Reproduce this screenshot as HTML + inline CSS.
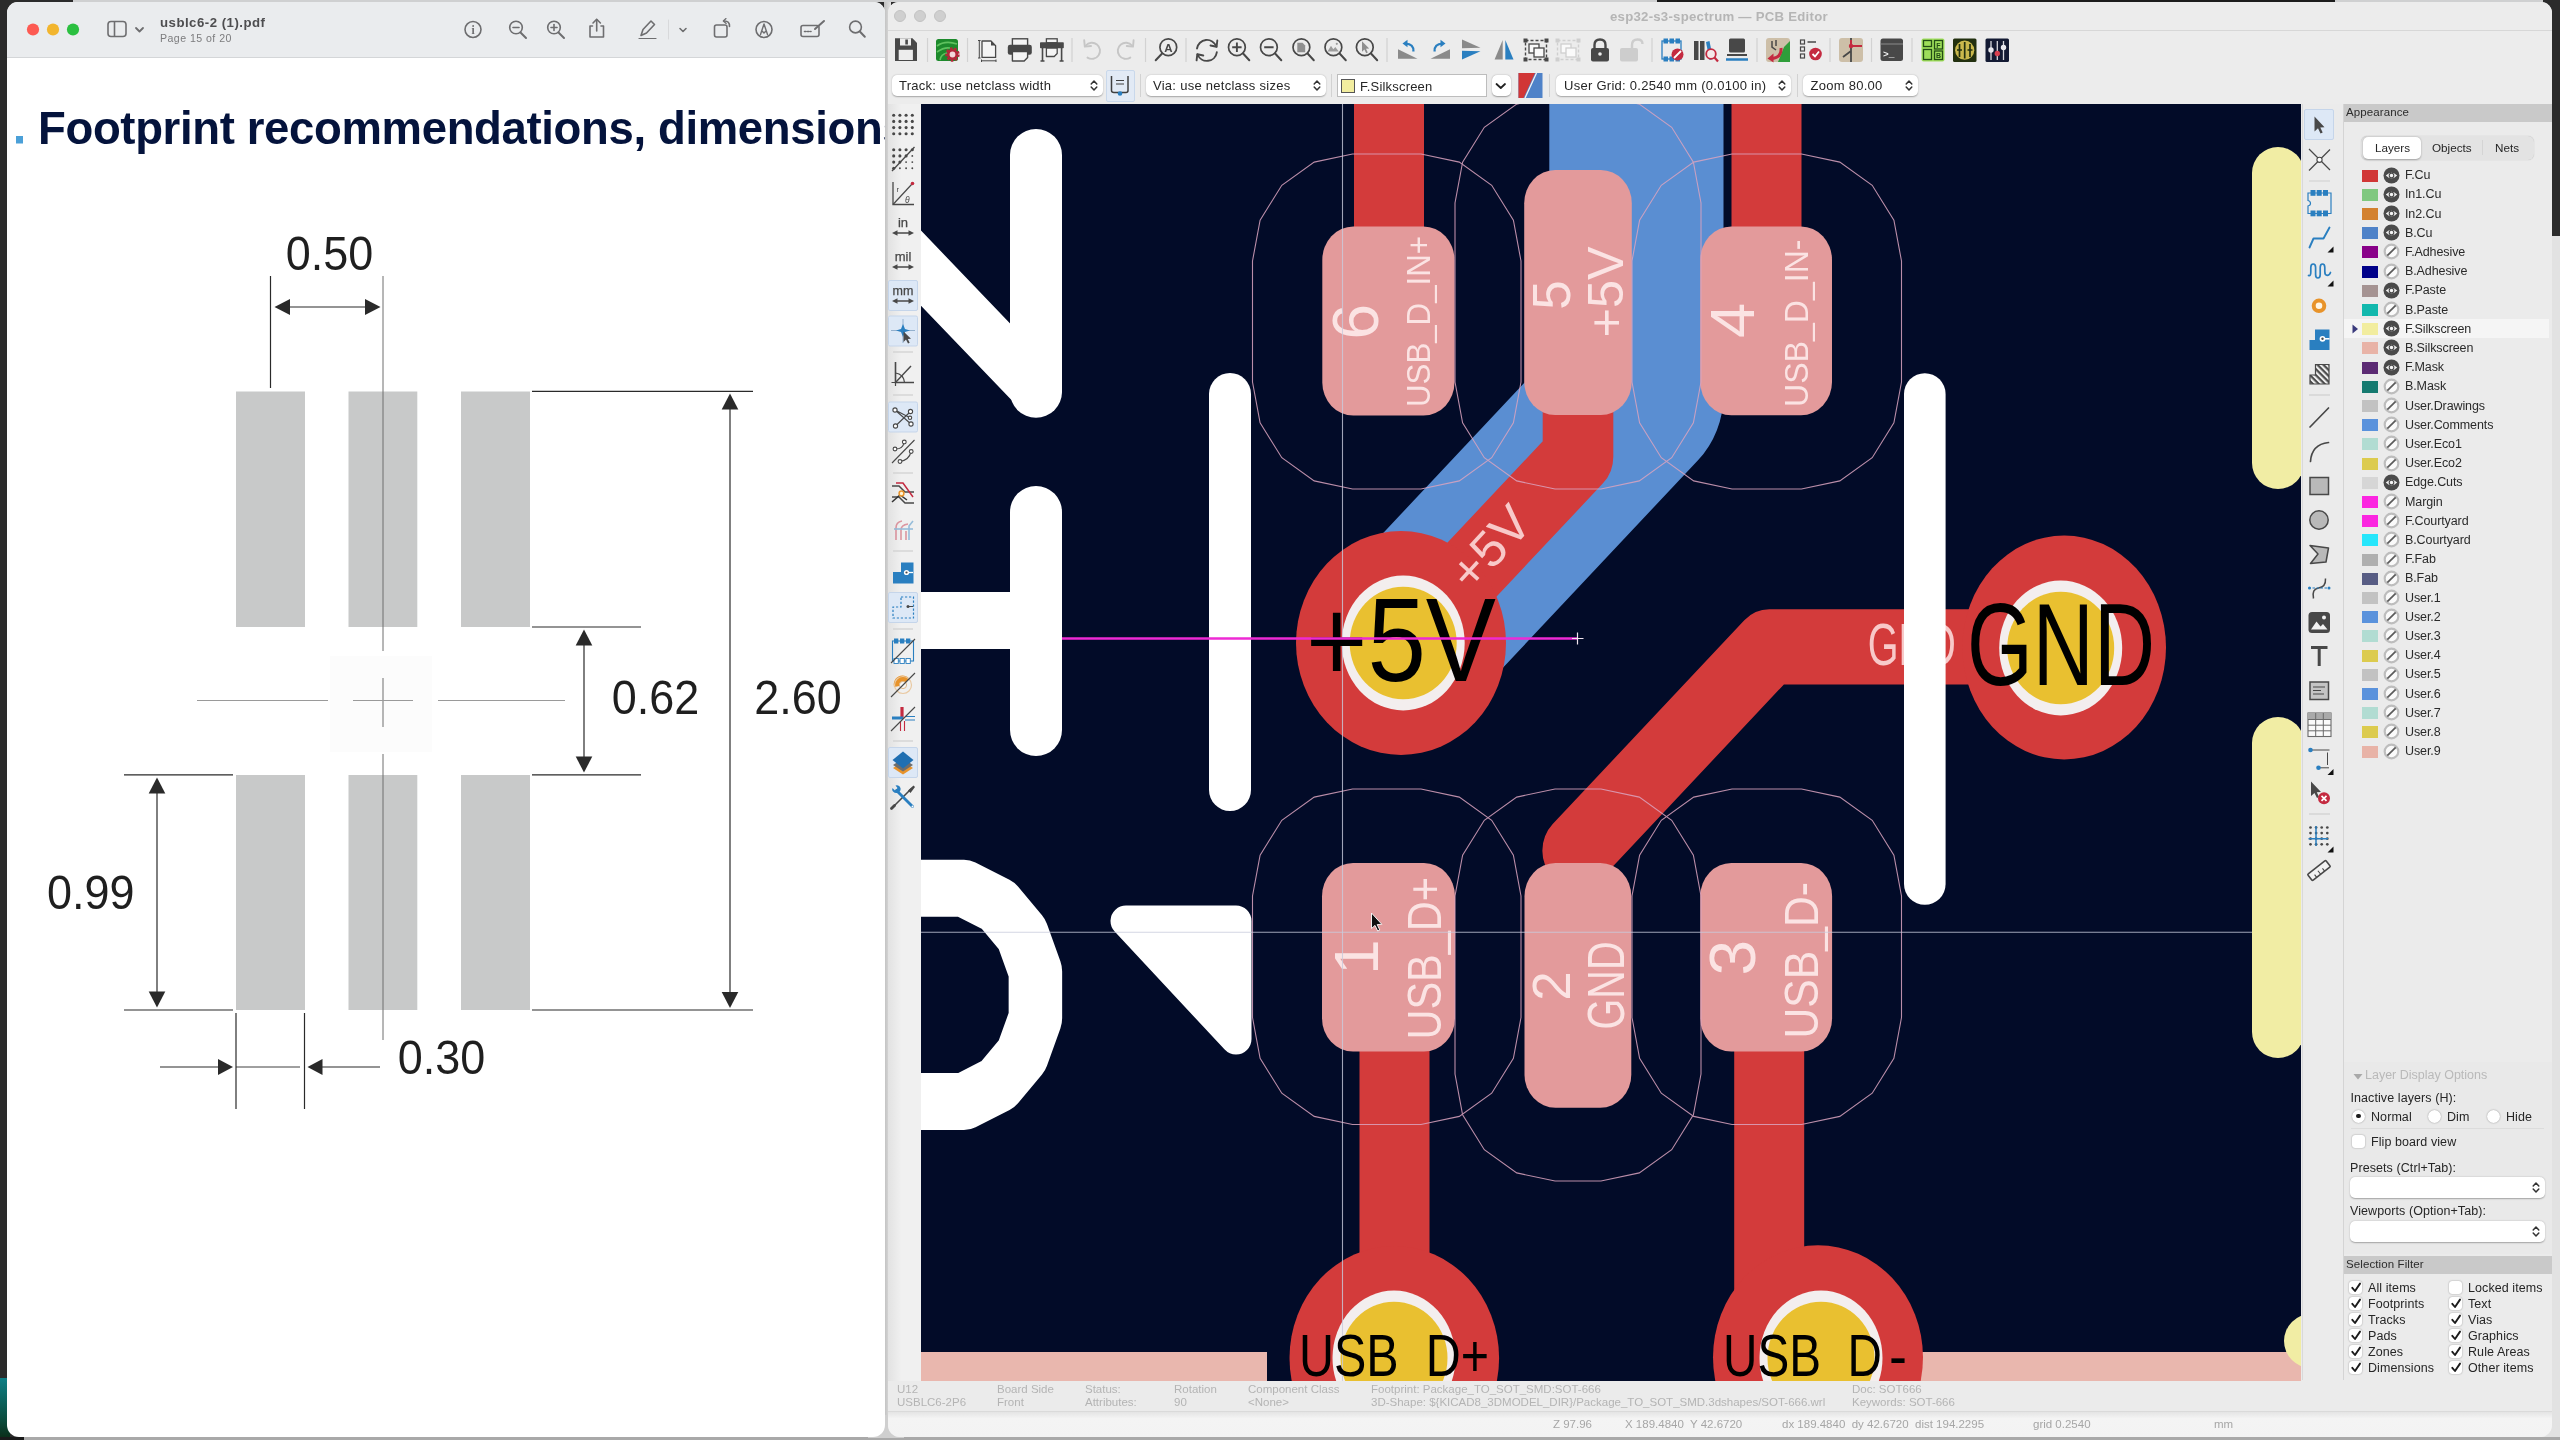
<!DOCTYPE html>
<html lang="en"><head><meta charset="utf-8"><title>PCB Editor</title>
<style>
*{box-sizing:border-box;margin:0;padding:0}
html,body{width:2560px;height:1440px;overflow:hidden;background:#2b2b2b;font-family:"Liberation Sans",sans-serif;}
.abs{position:absolute}
#desk{position:absolute;left:0;top:0;width:2560px;height:1440px;overflow:hidden;background:#2b2b2b;will-change:transform}
#pdf{position:absolute;left:7px;top:2px;width:878px;height:1435px;background:#fff;border-radius:11px 11px 12px 12px;overflow:hidden}
#pdfbar{position:absolute;left:0;top:0;width:878px;height:56px;background:#eaecee;border-bottom:1px solid #d4d6d8}
.tl{position:absolute;width:13px;height:13px;border-radius:50%}
#kicad{position:absolute;left:888px;top:2px;width:1664px;height:1435px;background:#ebebeb;border-radius:11px 11px 12px 12px;overflow:hidden}
.t{position:absolute;white-space:nowrap;line-height:1}
.lay{position:absolute;left:0;height:19px;width:204.500px}
.sw{position:absolute;left:18px;top:4px;width:16px;height:12px}
.ln{position:absolute;left:61px;top:3.7px;font-size:12.5px;color:#2a2a2a;white-space:nowrap;line-height:1;letter-spacing:-0.1px}
.dd{position:absolute;background:#fff;border-radius:5px;box-shadow:0 0.5px 1.5px rgba(0,0,0,.3);font-size:13px;color:#262626;line-height:1;white-space:nowrap;letter-spacing:0.27px}
.cb{position:absolute;width:13px;height:13px;border-radius:3px;background:#fff;box-shadow:0 0 1.5px rgba(0,0,0,.45)}
.rb{position:absolute;width:13px;height:13px;border-radius:50%;background:#fff;box-shadow:0 0 1.5px rgba(0,0,0,.45)}
.sf{position:absolute;margin-top:0.7px;letter-spacing:0.08px;font-size:12.5px;color:#262626;white-space:nowrap;line-height:1}
.msg{position:absolute;font-size:11.5px;color:#b4b4b4;white-space:nowrap;line-height:1}
.st{position:absolute;font-size:11.5px;color:#a6a6a6;white-space:nowrap;line-height:1;top:1417px}
</style></head><body><div id="desk">
<div class="abs" style="left:0;top:1378px;width:10px;height:62px;background:linear-gradient(#0e7f86,#0b4a3a 70%,#0a2a14)"></div>
<div class="abs" style="left:2538px;top:236px;width:22px;height:1204px;background:#e2e2e2"></div>
<div class="abs" style="left:0;top:1437px;width:2560px;height:3px;background:#a9a9a9"></div>
<div class="abs" style="left:0;top:1437px;width:24px;height:3px;background:#1a1a1a"></div>
<div class="abs" style="left:884px;top:0;width:7px;height:1438px;background:linear-gradient(90deg,#bfbfbf,#c9c9c9 30%,#e2e2e2)"></div>
<div class="abs" style="left:868px;top:1415px;width:36px;height:23px;background:#cfcfcf"></div>
<div id="pdf"><div id="pdfbar"></div>
<svg style="position:absolute;left:-7px;top:-2px" width="892" height="1440" viewBox="0 0 892 1440" font-family="Liberation Sans, sans-serif">
<circle cx="33" cy="29.5" r="6.1" fill="#fd5a52"/><circle cx="53" cy="29.5" r="6.1" fill="#f2b52e"/><circle cx="73" cy="29.5" r="6.1" fill="#2bc040"/>
<g fill="none" stroke="#6e6e70" stroke-width="1.6" stroke-linecap="round" stroke-linejoin="round">
<rect x="108" y="21.5" width="18" height="15" rx="3"/><line x1="114.5" y1="22" x2="114.5" y2="36"/>
<polyline points="136,28 139.5,31.5 143,28" stroke-width="1.8"/>
<circle cx="473" cy="29.5" r="8"/>
<circle cx="516" cy="27.5" r="6.3"/><line x1="520.5" y1="32.5" x2="526" y2="38" stroke-width="2"/><line x1="513" y1="27.5" x2="519" y2="27.5"/>
<circle cx="554" cy="27.5" r="6.3"/><line x1="558.5" y1="32.5" x2="564" y2="38" stroke-width="2"/><line x1="551" y1="27.5" x2="557" y2="27.5"/><line x1="554" y1="24.5" x2="554" y2="30.5"/>
<path d="M592.5,26 H590 V37 H603.5 V26 H601"/><line x1="596.7" y1="19.5" x2="596.7" y2="31"/><polyline points="593,23 596.7,19.3 600.4,23"/>
<path d="M641,35.5 L643,29.5 L651,21 L654.5,24.5 L646.5,33 Z"/><line x1="639" y1="38.5" x2="656" y2="38.5" stroke-width="1.2"/>
<line x1="668.5" y1="20" x2="668.5" y2="39" stroke="#d8d9db" stroke-width="1"/>
<polyline points="680,28.5 683,31.5 686,28.5" stroke-width="1.6"/>
<rect x="714.5" y="25" width="12.5" height="12" rx="2"/><path d="M729.500,26.500 Q729.800,20.800 724,21"/><polyline points="726,18.600 723.300,21 726.200,23.400" stroke-width="1.3"/>
<circle cx="764" cy="29.5" r="8"/><path d="M760.5,34.5 L764,24 L767.5,34.5 M762,31 L764,33 L766,31" stroke-width="1.4"/>
<rect x="801" y="25.5" width="18" height="11" rx="2"/><line x1="804.5" y1="31.5" x2="811" y2="31.5" stroke-dasharray="1.5 1.5"/><line x1="815" y1="29" x2="824" y2="21" stroke-width="2"/>
<circle cx="855.5" cy="27" r="5.900"/><line x1="859.800" y1="31.500" x2="864.800" y2="36.800" stroke-width="2"/>
</g>
<text x="473" y="33.8" font-size="11.5" font-weight="bold" text-anchor="middle" fill="#6e6e70" font-family="Liberation Serif, serif">i</text>
<text x="160" y="27" font-size="13.2" font-weight="bold" fill="#4e4e50" letter-spacing="0.5">usblc6-2 (1).pdf</text>
<text x="160" y="42" font-size="10.6" fill="#7c7c7e" letter-spacing="0.45">Page 15 of 20</text>
<rect x="16" y="136" width="7" height="7.5" fill="#4ba0d8"/>
<text x="38" y="143.5" font-size="45.5" font-weight="bold" fill="#04133c" letter-spacing="-0.35">Footprint recommendations, dimensions</text>
<rect x="236" y="391.5" width="69" height="235.5" fill="#c8c9c9"/>
<rect x="236" y="775" width="69" height="235" fill="#c8c9c9"/>
<rect x="348.5" y="391.5" width="68.8" height="235.5" fill="#c8c9c9"/>
<rect x="348.5" y="775" width="68.8" height="235" fill="#c8c9c9"/>
<rect x="461" y="391.5" width="69" height="235.5" fill="#c8c9c9"/>
<rect x="461" y="775" width="69" height="235" fill="#c8c9c9"/>
<rect x="330" y="656" width="102" height="96" fill="#fcfcfc"/>
<g stroke="#2a2a2a" stroke-width="1.2" fill="none">
<g stroke="#6f6f6f" stroke-width="1">
<line x1="383" y1="276" x2="383" y2="651"/><line x1="383" y1="678" x2="383" y2="727"/><line x1="383" y1="754" x2="383" y2="1040"/>
</g><g stroke="#9a9a9a" stroke-width="1">
<line x1="197" y1="700.5" x2="328" y2="700.5"/><line x1="353" y1="700.5" x2="413" y2="700.5"/><line x1="438" y1="700.5" x2="565" y2="700.5"/></g>
<line x1="270.5" y1="276" x2="270.5" y2="388"/><line x1="285" y1="307" x2="368" y2="307"/>
<line x1="532" y1="391.3" x2="753" y2="391.3"/><line x1="532" y1="627" x2="641" y2="627"/><line x1="532" y1="774.8" x2="641" y2="774.8"/><line x1="532" y1="1010" x2="753" y2="1010"/>
<line x1="124" y1="774.8" x2="233" y2="774.8"/><line x1="124" y1="1010" x2="233" y2="1010"/>
<line x1="730" y1="405" x2="730" y2="996"/><line x1="584" y1="640" x2="584" y2="762"/><line x1="157" y1="790" x2="157" y2="996"/>
<line x1="236" y1="1013" x2="236" y2="1109"/><line x1="304.5" y1="1013" x2="304.5" y2="1109"/>
<line x1="160" y1="1067" x2="222" y2="1067"/><line x1="236" y1="1067" x2="300" y2="1067" stroke-width="0.9"/><line x1="320" y1="1067" x2="380" y2="1067"/>
</g>
<polygon points="274.5,307 290,299 290,315" fill="#2a2a2a"/><polygon points="380.5,307 365,299 365,315" fill="#2a2a2a"/>
<polygon points="730,393.5 721.7,409.5 738.3,409.5" fill="#2a2a2a"/><polygon points="730,1008 721.7,992 738.3,992" fill="#2a2a2a"/>
<polygon points="584,629.5 575.7,645.5 592.3,645.5" fill="#2a2a2a"/><polygon points="584,772.5 575.7,756.5 592.3,756.5" fill="#2a2a2a"/>
<polygon points="157,777.5 148.7,793.5 165.3,793.5" fill="#2a2a2a"/><polygon points="157,1007.5 148.7,991.5 165.3,991.5" fill="#2a2a2a"/>
<polygon points="233,1067 218,1059 218,1075" fill="#2a2a2a"/><polygon points="307.5,1067 322.5,1059 322.5,1075" fill="#2a2a2a"/>
<text x="285.85" y="269.5" font-size="47.5" fill="#1f1f1f" textLength="87.5" lengthAdjust="spacingAndGlyphs">0.50</text>
<text x="611.65" y="714.4" font-size="47.5" fill="#1f1f1f" textLength="87.5" lengthAdjust="spacingAndGlyphs">0.62</text>
<text x="754.25" y="713.6" font-size="47.5" fill="#1f1f1f" textLength="87.5" lengthAdjust="spacingAndGlyphs">2.60</text>
<text x="46.95" y="908.6" font-size="47.5" fill="#1f1f1f" textLength="87.5" lengthAdjust="spacingAndGlyphs">0.99</text>
<text x="397.65" y="1073.6" font-size="47.5" fill="#1f1f1f" textLength="87.5" lengthAdjust="spacingAndGlyphs">0.30</text>
</svg></div>
<div id="kicad">
<svg style="position:absolute;left:33px;top:102px" width="1380" height="1277" viewBox="921 104 1380 1277" font-family="Liberation Sans, sans-serif">
<rect x="921" y="104" width="1380" height="1277" fill="#020b28"/>
<rect x="921" y="1352" width="346" height="30" fill="#e9b7ae"/><rect x="1900" y="1352" width="401" height="30" fill="#e9b7ae"/>
<g transform="scale(1,1.064)" fill="none" stroke-linejoin="round" stroke-linecap="round">
<path d="M1403,604.323 L1636.4,370.923 V40" stroke="#5a8ed2" stroke-width="174.2"/>
<g stroke="#d33b3b">
<path d="M1389,40 V290" stroke-width="70"/>
<path d="M1766.5,40 V290" stroke-width="70"/>
<path d="M1578,360 V429.323 L1403,604.323" stroke-width="70.6"/>
<path d="M2064,607.9 H1769.3 L1577.7,799.5" stroke-width="70.7"/>
<path d="M1394.5,950 V1280" stroke-width="70"/>
<path d="M1769.2,950 V1280" stroke-width="70"/>
</g></g>
<ellipse cx="1401" cy="643" rx="105" ry="112" fill="#d33b3b"/><ellipse cx="1403.2" cy="643" rx="61.5" ry="67.5" fill="#f3eeee"/><ellipse cx="1403.2" cy="643" rx="53.5" ry="56.3" fill="#e9c030"/>
<ellipse cx="2064.2" cy="647.5" rx="101.8" ry="112" fill="#d33b3b"/><ellipse cx="2060.7" cy="648" rx="61.5" ry="67.5" fill="#f3eeee"/><ellipse cx="2060.7" cy="648" rx="53.5" ry="56.3" fill="#e9c030"/>
<ellipse cx="1394.3" cy="1358" rx="104.8" ry="112" fill="#d33b3b"/><ellipse cx="1394" cy="1358" rx="61.5" ry="67.5" fill="#f3eeee"/><ellipse cx="1394" cy="1358" rx="53.5" ry="56.3" fill="#e9c030"/>
<ellipse cx="1818" cy="1357.3" rx="105" ry="112" fill="#d33b3b"/><ellipse cx="1821" cy="1358" rx="61.5" ry="67.5" fill="#f3eeee"/><ellipse cx="1821" cy="1358" rx="53.5" ry="56.3" fill="#e9c030"/>
<rect x="1322.3" y="226.5" width="132.2" height="189.1" rx="31" ry="33.17" fill="#e39a9b"/>
<rect x="1524.2" y="170" width="107.6" height="245" rx="31" ry="33.17" fill="#e39a9b"/>
<rect x="1700.3" y="226.5" width="131.7" height="188.7" rx="31" ry="33.17" fill="#e39a9b"/>
<rect x="1322" y="863" width="133" height="188.4" rx="31" ry="33.17" fill="#e39a9b"/>
<rect x="1524.5" y="863" width="106.8" height="244.8" rx="31" ry="33.17" fill="#e39a9b"/>
<rect x="1700.3" y="863" width="131.8" height="188.4" rx="31" ry="33.17" fill="#e39a9b"/>
<g fill="none" stroke="#dba4bf" stroke-width="1.1" opacity="0.85">
<polygon points="1421.0,154.0 1459.3,162.1 1491.7,185.3 1513.4,220.1 1521.0,261.0 1521.0,382.0 1513.4,422.9 1491.7,457.7 1459.3,480.9 1421.0,489.0 1352.5,489.0 1314.2,480.9 1281.8,457.7 1260.1,422.9 1252.5,382.0 1252.5,261.0 1260.1,220.1 1281.8,185.3 1314.2,162.1 1352.5,154.0"/>
<polygon points="1601.0,96.0 1639.3,104.1 1671.7,127.3 1693.4,162.1 1701.0,203.0 1701.0,382.0 1693.4,422.9 1671.7,457.7 1639.3,480.9 1601.0,489.0 1555.0,489.0 1516.7,480.9 1484.3,457.7 1462.6,422.9 1455.0,382.0 1455.0,203.0 1462.6,162.1 1484.3,127.3 1516.7,104.1 1555.0,96.0"/>
<polygon points="1801.5,154.0 1839.8,162.1 1872.2,185.3 1893.9,220.1 1901.5,261.0 1901.5,382.0 1893.9,422.9 1872.2,457.7 1839.8,480.9 1801.5,489.0 1732.0,489.0 1693.7,480.9 1661.3,457.7 1639.6,422.9 1632.0,382.0 1632.0,261.0 1639.6,220.1 1661.3,185.3 1693.7,162.1 1732.0,154.0"/>
<polygon points="1421.0,789.0 1459.3,797.1 1491.7,820.3 1513.4,855.1 1521.0,896.0 1521.0,1017.5 1513.4,1058.4 1491.7,1093.2 1459.3,1116.4 1421.0,1124.5 1352.5,1124.5 1314.2,1116.4 1281.8,1093.2 1260.1,1058.4 1252.5,1017.5 1252.5,896.0 1260.1,855.1 1281.8,820.3 1314.2,797.1 1352.5,789.0"/>
<polygon points="1601.0,789.0 1639.3,797.1 1671.7,820.3 1693.4,855.1 1701.0,896.0 1701.0,1074.0 1693.4,1114.9 1671.7,1149.7 1639.3,1172.9 1601.0,1181.0 1555.0,1181.0 1516.7,1172.9 1484.3,1149.7 1462.6,1114.9 1455.0,1074.0 1455.0,896.0 1462.6,855.1 1484.3,820.3 1516.7,797.1 1555.0,789.0"/>
<polygon points="1801.5,789.0 1839.8,797.1 1872.2,820.3 1893.9,855.1 1901.5,896.0 1901.5,1017.5 1893.9,1058.4 1872.2,1093.2 1839.8,1116.4 1801.5,1124.5 1732.0,1124.5 1693.7,1116.4 1661.3,1093.2 1639.6,1058.4 1632.0,1017.5 1632.0,896.0 1639.6,855.1 1661.3,820.3 1693.7,797.1 1732.0,789.0"/>
</g>
<text transform="translate(1377.5,321.7) rotate(-90)" font-size="64" fill="#fbe3e3" text-anchor="middle">6</text>
<text transform="translate(1430,407) rotate(-90)" font-size="32.6" fill="#fbe3e3" textLength="171" lengthAdjust="spacingAndGlyphs">USB_D_IN+</text>
<text transform="translate(1569.5,295) rotate(-90)" font-size="53" fill="#fbe3e3" text-anchor="middle">5</text>
<text transform="translate(1622.8,337.5) rotate(-90)" font-size="50.5" fill="#fbe3e3" textLength="91" lengthAdjust="spacingAndGlyphs">+5V</text>
<text transform="translate(1753.7,320.6) rotate(-90)" font-size="63" fill="#fbe3e3" text-anchor="middle">4</text>
<text transform="translate(1808,407) rotate(-90)" font-size="33.6" fill="#fbe3e3" textLength="167.5" lengthAdjust="spacingAndGlyphs">USB_D_IN-</text>
<text transform="translate(1377.5,957) rotate(-90)" font-size="63.5" fill="#fbe3e3" text-anchor="middle">1</text>
<text transform="translate(1441,1039.5) rotate(-90)" font-size="49" fill="#fbe3e3" textLength="162.5" lengthAdjust="spacingAndGlyphs">USB_D+</text>
<text transform="translate(1569.8,986) rotate(-90)" font-size="53" fill="#fbe3e3" text-anchor="middle">2</text>
<text transform="translate(1624,1029.5) rotate(-90)" font-size="52" fill="#fbe3e3" textLength="88" lengthAdjust="spacingAndGlyphs">GND</text>
<text transform="translate(1754.6,957.8) rotate(-90)" font-size="64" fill="#fbe3e3" text-anchor="middle">3</text>
<text transform="translate(1818,1038.5) rotate(-90)" font-size="48" fill="#fbe3e3" textLength="156.5" lengthAdjust="spacingAndGlyphs">USB_D-</text>
<text transform="translate(1489.5,547) rotate(-47.5) translate(0,18)" font-size="50" text-anchor="middle" fill="#f8c9c9" textLength="93" lengthAdjust="spacingAndGlyphs">+5V</text>
<text x="1867.8" y="665" font-size="59.6" fill="#f8c9c9" textLength="88" lengthAdjust="spacingAndGlyphs">GND</text>
<g fill="none" stroke="#fff" stroke-linecap="round" stroke-linejoin="round">
<path d="M1036,155 V391.8" stroke-width="52"/><path d="M1036,388 L800,142" stroke-width="52"/>
<path d="M1036,512 V730" stroke-width="52"/><path d="M900,620.5 H1030" stroke-width="57" stroke-linecap="butt"/>
<path d="M1230,394 V790" stroke-width="42"/>
<path d="M1924.8,394 V884" stroke-width="41.6"/>
<g transform="scale(1,1.064)"><path d="M880,834.900 H964 L998,851 L1022,878 L1035.400,913 V957 L1022,992 L998,1019 L964,1035.300 H880" stroke-width="53.500" stroke-linejoin="round"/></g>
</g>
<polygon points="1126,921 1236,921 1236,1039" fill="#fff" stroke="#fff" stroke-width="31" stroke-linejoin="round"/>
<g fill="none" stroke="#f1eda4" stroke-linecap="round" stroke-width="52">
<path d="M2278,173 V463"/><path d="M2278,743 V1032"/></g>
<ellipse cx="2311" cy="1341" rx="27" ry="27" fill="#f1eda4"/>
<line x1="1342.5" y1="104" x2="1342.5" y2="1381" stroke="#c9cbdc" stroke-width="1.1" opacity="0.8"/>
<line x1="921" y1="932.3" x2="2252" y2="932.3" stroke="#c9cbdc" stroke-width="1.1" opacity="0.8"/>
<g fill="#000">
<text x="1306" y="681" font-size="119.5" textLength="190" lengthAdjust="spacingAndGlyphs">+5V</text>
<text x="1967" y="684.8" font-size="117" textLength="188" lengthAdjust="spacingAndGlyphs">GND</text>
<text x="1299" y="1376" font-size="58.6" textLength="190" lengthAdjust="spacingAndGlyphs" xml:space="preserve">USB  D+</text>
<text x="1723" y="1376" font-size="58.6" textLength="159" lengthAdjust="spacingAndGlyphs" xml:space="preserve">USB  D</text><text x="1889" y="1376" font-size="58.6" textLength="18" lengthAdjust="spacingAndGlyphs">-</text>
</g>
<line x1="1062" y1="638.5" x2="1578" y2="638.5" stroke="#ee2ad4" stroke-width="2.5"/>
<path d="M1572,638.5 H1583.500 M1577.5,632.500 V644.500" stroke="#f3e6f0" stroke-width="1.2" fill="none"/>
<path d="M1371.500,913 L1371.500,928.500 L1375,925.400 L1377.700,931 L1379.800,930 L1377.200,924.600 L1381.800,924.300 Z" fill="#111" stroke="#fff" stroke-width="0.9"/>
</svg>
<div class="abs" style="left:0px;top:-1px;width:1664px;height:30px;background:#ececec;border-bottom:1px solid #d7d7d7"></div>
<div class="abs" style="left:6px;top:8px;width:12px;height:12px;border-radius:50%;background:#cfcfcf;border:0.5px solid #c2c2c2"></div>
<div class="abs" style="left:26px;top:8px;width:12px;height:12px;border-radius:50%;background:#cfcfcf;border:0.5px solid #c2c2c2"></div>
<div class="abs" style="left:46px;top:8px;width:12px;height:12px;border-radius:50%;background:#cfcfcf;border:0.5px solid #c2c2c2"></div>
<div class="t" style="left:722px;top:7.5px;font-size:13.2px;font-weight:bold;color:#b5b5b5;letter-spacing:0.25px">esp32-s3-spectrum — PCB Editor</div>
<div class="abs" style="left:0px;top:29px;width:1664px;height:73px;background:#ececec"></div>
<div class="dd" style="left:4px;top:72.5px;width:211px;height:21.5px;padding:4.45px 0 0 7px;font-size:13px;">Track: use netclass width<svg class="abs" style="right:5px;top:4.25px" width="8" height="13" viewBox="0 0 8 13"><path d="M1.2,5 L4,2 L6.800,5 M1.200,8 L4,11 L6.800,8" fill="none" stroke="#333" stroke-width="1.500" stroke-linecap="round" stroke-linejoin="round"/></svg></div>
<div class="abs" style="left:217.5px;top:68px;width:29.5px;height:31.5px;background:#e2eaf5;border:1px solid #c9d8eb;border-radius:2px"></div>
<div class="abs" style="left:251.5px;top:72px;width:1px;height:23px;background:#d2d2d2"></div>
<div class="abs" style="left:442.5px;top:72px;width:1px;height:23px;background:#d2d2d2"></div>
<div class="abs" style="left:661px;top:72px;width:1px;height:23px;background:#d2d2d2"></div>
<div class="abs" style="left:908.5px;top:72px;width:1px;height:23px;background:#d2d2d2"></div>
<div class="dd" style="left:258px;top:72.5px;width:180px;height:21.5px;padding:4.45px 0 0 7px;font-size:13px;">Via: use netclass sizes<svg class="abs" style="right:5px;top:4.25px" width="8" height="13" viewBox="0 0 8 13"><path d="M1.2,5 L4,2 L6.800,5 M1.200,8 L4,11 L6.800,8" fill="none" stroke="#333" stroke-width="1.500" stroke-linecap="round" stroke-linejoin="round"/></svg></div>
<div class="abs" style="left:449px;top:72px;width:150px;height:23px;background:#fff;border:1px solid #bdbdbd"></div>
<div class="abs" style="left:453px;top:76.5px;width:14px;height:14px;background:#f2ed9f;border:1px solid #555"></div>
<div class="t" style="left:472px;top:78px;font-size:13px;color:#262626;letter-spacing:0.2px">F.Silkscreen</div>
<div class="abs" style="left:603.5px;top:73px;width:19px;height:21px;background:#fff;border-radius:5px;box-shadow:0 0.5px 1.5px rgba(0,0,0,.35)"></div>
<div class="dd" style="left:668px;top:72.5px;width:235px;height:21.5px;padding:4.45px 0 0 8px;font-size:13px;">User Grid: 0.2540 mm (0.0100 in)<svg class="abs" style="right:5px;top:4.25px" width="8" height="13" viewBox="0 0 8 13"><path d="M1.2,5 L4,2 L6.800,5 M1.200,8 L4,11 L6.800,8" fill="none" stroke="#333" stroke-width="1.500" stroke-linecap="round" stroke-linejoin="round"/></svg></div>
<div class="dd" style="left:914.5px;top:72.5px;width:115px;height:21.5px;padding:4.45px 0 0 8px;font-size:13px;">Zoom 80.00<svg class="abs" style="right:5px;top:4.25px" width="8" height="13" viewBox="0 0 8 13"><path d="M1.2,5 L4,2 L6.800,5 M1.200,8 L4,11 L6.800,8" fill="none" stroke="#333" stroke-width="1.500" stroke-linecap="round" stroke-linejoin="round"/></svg></div>
<div class="abs" style="left:0px;top:102px;width:33px;height:1277px;background:linear-gradient(90deg,#e2e2e2,#f0f0f0 40%,#f0f0f0)"></div>
<div class="abs" style="left:1413px;top:102px;width:43px;height:1277px;background:#ebebeb"></div>
<div class="abs" style="left:1413.5px;top:102px;width:1px;height:1277px;background:#d9d9d9"></div>
<div class="abs" style="left:1455px;top:102px;width:1px;height:1277px;background:#d4d4d4"></div>
<div class="abs" style="left:1456px;top:102px;width:208px;height:17.5px;background:#c9c9c9"></div>
<div class="t" style="left:1458px;top:105px;font-size:11.5px;color:#2c2c2c;letter-spacing:0.1px">Appearance</div>
<div class="abs" style="left:1456px;top:119.5px;width:208px;height:1259px;background:#ebebeb"></div>
<div class="abs" style="left:1473px;top:133.5px;width:173px;height:24px;background:#e3e3e3;border-radius:6px;box-shadow:0 0 1px rgba(0,0,0,.25)"></div>
<div class="abs" style="left:1474.5px;top:134.5px;width:58px;height:22px;background:#fff;border-radius:5px;box-shadow:0 0.5px 2px rgba(0,0,0,.3)"></div>
<div class="abs" style="left:1594px;top:138px;width:1px;height:15px;background:#d4d4d4"></div>
<div class="t" style="left:1487px;top:139.5px;font-size:11.7px;color:#262626">Layers</div>
<div class="t" style="left:1544px;top:139.5px;font-size:11.7px;color:#262626">Objects</div>
<div class="t" style="left:1607px;top:139.5px;font-size:11.7px;color:#262626">Nets</div>
<div class="lay" style="left:1456px;top:163.5px;"><div class="sw" style="background:#d13636"></div><svg class="abs" style="left:39px;top:1px" width="17" height="17" viewBox="0 0 17 17"><circle cx="8.500" cy="8.500" r="8" fill="#4a4a4a"/><path d="M2.800,8.500 Q8.500,2.800 14.200,8.500 Q8.500,14.200 2.800,8.500 Z" fill="#f4f4f4"/><circle cx="8.500" cy="8.500" r="2.300" fill="none" stroke="#4a4a4a" stroke-width="1.100"/></svg><div class="ln">F.Cu</div></div>
<div class="lay" style="left:1456px;top:182.7px;"><div class="sw" style="background:#7fc87f"></div><svg class="abs" style="left:39px;top:1px" width="17" height="17" viewBox="0 0 17 17"><circle cx="8.500" cy="8.500" r="8" fill="#4a4a4a"/><path d="M2.800,8.500 Q8.500,2.800 14.200,8.500 Q8.500,14.200 2.800,8.500 Z" fill="#f4f4f4"/><circle cx="8.500" cy="8.500" r="2.300" fill="none" stroke="#4a4a4a" stroke-width="1.100"/></svg><div class="ln">In1.Cu</div></div>
<div class="lay" style="left:1456px;top:201.9px;"><div class="sw" style="background:#d3812f"></div><svg class="abs" style="left:39px;top:1px" width="17" height="17" viewBox="0 0 17 17"><circle cx="8.500" cy="8.500" r="8" fill="#4a4a4a"/><path d="M2.800,8.500 Q8.500,2.800 14.200,8.500 Q8.500,14.200 2.800,8.500 Z" fill="#f4f4f4"/><circle cx="8.500" cy="8.500" r="2.300" fill="none" stroke="#4a4a4a" stroke-width="1.100"/></svg><div class="ln">In2.Cu</div></div>
<div class="lay" style="left:1456px;top:221.1px;"><div class="sw" style="background:#4f82c8"></div><svg class="abs" style="left:39px;top:1px" width="17" height="17" viewBox="0 0 17 17"><circle cx="8.500" cy="8.500" r="8" fill="#4a4a4a"/><path d="M2.800,8.500 Q8.500,2.800 14.200,8.500 Q8.500,14.200 2.800,8.500 Z" fill="#f4f4f4"/><circle cx="8.500" cy="8.500" r="2.300" fill="none" stroke="#4a4a4a" stroke-width="1.100"/></svg><div class="ln">B.Cu</div></div>
<div class="lay" style="left:1456px;top:240.3px;"><div class="sw" style="background:#880088"></div><svg class="abs" style="left:39px;top:1px" width="17" height="17" viewBox="0 0 17 17"><circle cx="8.500" cy="8.500" r="6.800" fill="#fafafa" stroke="#bdbdbd" stroke-width="2.200"/><line x1="4.300" y1="12.700" x2="12.700" y2="4.300" stroke="#5a5a5a" stroke-width="1.700"/></svg><div class="ln">F.Adhesive</div></div>
<div class="lay" style="left:1456px;top:259.5px;"><div class="sw" style="background:#000088"></div><svg class="abs" style="left:39px;top:1px" width="17" height="17" viewBox="0 0 17 17"><circle cx="8.500" cy="8.500" r="6.800" fill="#fafafa" stroke="#bdbdbd" stroke-width="2.200"/><line x1="4.300" y1="12.700" x2="12.700" y2="4.300" stroke="#5a5a5a" stroke-width="1.700"/></svg><div class="ln">B.Adhesive</div></div>
<div class="lay" style="left:1456px;top:278.7px;"><div class="sw" style="background:#a59392"></div><svg class="abs" style="left:39px;top:1px" width="17" height="17" viewBox="0 0 17 17"><circle cx="8.500" cy="8.500" r="8" fill="#4a4a4a"/><path d="M2.800,8.500 Q8.500,2.800 14.200,8.500 Q8.500,14.200 2.800,8.500 Z" fill="#f4f4f4"/><circle cx="8.500" cy="8.500" r="2.300" fill="none" stroke="#4a4a4a" stroke-width="1.100"/></svg><div class="ln">F.Paste</div></div>
<div class="lay" style="left:1456px;top:297.9px;"><div class="sw" style="background:#12b8ad"></div><svg class="abs" style="left:39px;top:1px" width="17" height="17" viewBox="0 0 17 17"><circle cx="8.500" cy="8.500" r="6.800" fill="#fafafa" stroke="#bdbdbd" stroke-width="2.200"/><line x1="4.300" y1="12.700" x2="12.700" y2="4.300" stroke="#5a5a5a" stroke-width="1.700"/></svg><div class="ln">B.Paste</div></div>
<div class="lay" style="left:1456px;top:317.1px;background:#f5f5f5;"><div class="sw" style="background:#f2ed9f"></div><svg class="abs" style="left:39px;top:1px" width="17" height="17" viewBox="0 0 17 17"><circle cx="8.500" cy="8.500" r="8" fill="#4a4a4a"/><path d="M2.800,8.500 Q8.500,2.800 14.200,8.500 Q8.500,14.200 2.800,8.500 Z" fill="#f4f4f4"/><circle cx="8.500" cy="8.500" r="2.300" fill="none" stroke="#4a4a4a" stroke-width="1.100"/></svg><div class="ln">F.Silkscreen</div></div>
<div class="lay" style="left:1456px;top:336.3px;"><div class="sw" style="background:#e8b3a7"></div><svg class="abs" style="left:39px;top:1px" width="17" height="17" viewBox="0 0 17 17"><circle cx="8.500" cy="8.500" r="8" fill="#4a4a4a"/><path d="M2.800,8.500 Q8.500,2.800 14.200,8.500 Q8.500,14.200 2.800,8.500 Z" fill="#f4f4f4"/><circle cx="8.500" cy="8.500" r="2.300" fill="none" stroke="#4a4a4a" stroke-width="1.100"/></svg><div class="ln">B.Silkscreen</div></div>
<div class="lay" style="left:1456px;top:355.5px;"><div class="sw" style="background:#5c2b74"></div><svg class="abs" style="left:39px;top:1px" width="17" height="17" viewBox="0 0 17 17"><circle cx="8.500" cy="8.500" r="8" fill="#4a4a4a"/><path d="M2.800,8.500 Q8.500,2.800 14.200,8.500 Q8.500,14.200 2.800,8.500 Z" fill="#f4f4f4"/><circle cx="8.500" cy="8.500" r="2.300" fill="none" stroke="#4a4a4a" stroke-width="1.100"/></svg><div class="ln">F.Mask</div></div>
<div class="lay" style="left:1456px;top:374.7px;"><div class="sw" style="background:#157a70"></div><svg class="abs" style="left:39px;top:1px" width="17" height="17" viewBox="0 0 17 17"><circle cx="8.500" cy="8.500" r="6.800" fill="#fafafa" stroke="#bdbdbd" stroke-width="2.200"/><line x1="4.300" y1="12.700" x2="12.700" y2="4.300" stroke="#5a5a5a" stroke-width="1.700"/></svg><div class="ln">B.Mask</div></div>
<div class="lay" style="left:1456px;top:393.9px;"><div class="sw" style="background:#c2c2c2"></div><svg class="abs" style="left:39px;top:1px" width="17" height="17" viewBox="0 0 17 17"><circle cx="8.500" cy="8.500" r="6.800" fill="#fafafa" stroke="#bdbdbd" stroke-width="2.200"/><line x1="4.300" y1="12.700" x2="12.700" y2="4.300" stroke="#5a5a5a" stroke-width="1.700"/></svg><div class="ln">User.Drawings</div></div>
<div class="lay" style="left:1456px;top:413.1px;"><div class="sw" style="background:#5a92dc"></div><svg class="abs" style="left:39px;top:1px" width="17" height="17" viewBox="0 0 17 17"><circle cx="8.500" cy="8.500" r="6.800" fill="#fafafa" stroke="#bdbdbd" stroke-width="2.200"/><line x1="4.300" y1="12.700" x2="12.700" y2="4.300" stroke="#5a5a5a" stroke-width="1.700"/></svg><div class="ln">User.Comments</div></div>
<div class="lay" style="left:1456px;top:432.3px;"><div class="sw" style="background:#b1dcd2"></div><svg class="abs" style="left:39px;top:1px" width="17" height="17" viewBox="0 0 17 17"><circle cx="8.500" cy="8.500" r="6.800" fill="#fafafa" stroke="#bdbdbd" stroke-width="2.200"/><line x1="4.300" y1="12.700" x2="12.700" y2="4.300" stroke="#5a5a5a" stroke-width="1.700"/></svg><div class="ln">User.Eco1</div></div>
<div class="lay" style="left:1456px;top:451.5px;"><div class="sw" style="background:#dccb4e"></div><svg class="abs" style="left:39px;top:1px" width="17" height="17" viewBox="0 0 17 17"><circle cx="8.500" cy="8.500" r="6.800" fill="#fafafa" stroke="#bdbdbd" stroke-width="2.200"/><line x1="4.300" y1="12.700" x2="12.700" y2="4.300" stroke="#5a5a5a" stroke-width="1.700"/></svg><div class="ln">User.Eco2</div></div>
<div class="lay" style="left:1456px;top:470.7px;"><div class="sw" style="background:#d6d6d6"></div><svg class="abs" style="left:39px;top:1px" width="17" height="17" viewBox="0 0 17 17"><circle cx="8.500" cy="8.500" r="8" fill="#4a4a4a"/><path d="M2.800,8.500 Q8.500,2.800 14.200,8.500 Q8.500,14.200 2.800,8.500 Z" fill="#f4f4f4"/><circle cx="8.500" cy="8.500" r="2.300" fill="none" stroke="#4a4a4a" stroke-width="1.100"/></svg><div class="ln">Edge.Cuts</div></div>
<div class="lay" style="left:1456px;top:489.9px;"><div class="sw" style="background:#fb25e0"></div><svg class="abs" style="left:39px;top:1px" width="17" height="17" viewBox="0 0 17 17"><circle cx="8.500" cy="8.500" r="6.800" fill="#fafafa" stroke="#bdbdbd" stroke-width="2.200"/><line x1="4.300" y1="12.700" x2="12.700" y2="4.300" stroke="#5a5a5a" stroke-width="1.700"/></svg><div class="ln">Margin</div></div>
<div class="lay" style="left:1456px;top:509.1px;"><div class="sw" style="background:#fb25e0"></div><svg class="abs" style="left:39px;top:1px" width="17" height="17" viewBox="0 0 17 17"><circle cx="8.500" cy="8.500" r="6.800" fill="#fafafa" stroke="#bdbdbd" stroke-width="2.200"/><line x1="4.300" y1="12.700" x2="12.700" y2="4.300" stroke="#5a5a5a" stroke-width="1.700"/></svg><div class="ln">F.Courtyard</div></div>
<div class="lay" style="left:1456px;top:528.3px;"><div class="sw" style="background:#26e6fb"></div><svg class="abs" style="left:39px;top:1px" width="17" height="17" viewBox="0 0 17 17"><circle cx="8.500" cy="8.500" r="6.800" fill="#fafafa" stroke="#bdbdbd" stroke-width="2.200"/><line x1="4.300" y1="12.700" x2="12.700" y2="4.300" stroke="#5a5a5a" stroke-width="1.700"/></svg><div class="ln">B.Courtyard</div></div>
<div class="lay" style="left:1456px;top:547.5px;"><div class="sw" style="background:#afafaf"></div><svg class="abs" style="left:39px;top:1px" width="17" height="17" viewBox="0 0 17 17"><circle cx="8.500" cy="8.500" r="6.800" fill="#fafafa" stroke="#bdbdbd" stroke-width="2.200"/><line x1="4.300" y1="12.700" x2="12.700" y2="4.300" stroke="#5a5a5a" stroke-width="1.700"/></svg><div class="ln">F.Fab</div></div>
<div class="lay" style="left:1456px;top:566.7px;"><div class="sw" style="background:#585d84"></div><svg class="abs" style="left:39px;top:1px" width="17" height="17" viewBox="0 0 17 17"><circle cx="8.500" cy="8.500" r="6.800" fill="#fafafa" stroke="#bdbdbd" stroke-width="2.200"/><line x1="4.300" y1="12.700" x2="12.700" y2="4.300" stroke="#5a5a5a" stroke-width="1.700"/></svg><div class="ln">B.Fab</div></div>
<div class="lay" style="left:1456px;top:585.9px;"><div class="sw" style="background:#c2c2c2"></div><svg class="abs" style="left:39px;top:1px" width="17" height="17" viewBox="0 0 17 17"><circle cx="8.500" cy="8.500" r="6.800" fill="#fafafa" stroke="#bdbdbd" stroke-width="2.200"/><line x1="4.300" y1="12.700" x2="12.700" y2="4.300" stroke="#5a5a5a" stroke-width="1.700"/></svg><div class="ln">User.1</div></div>
<div class="lay" style="left:1456px;top:605.1px;"><div class="sw" style="background:#5a92dc"></div><svg class="abs" style="left:39px;top:1px" width="17" height="17" viewBox="0 0 17 17"><circle cx="8.500" cy="8.500" r="6.800" fill="#fafafa" stroke="#bdbdbd" stroke-width="2.200"/><line x1="4.300" y1="12.700" x2="12.700" y2="4.300" stroke="#5a5a5a" stroke-width="1.700"/></svg><div class="ln">User.2</div></div>
<div class="lay" style="left:1456px;top:624.3px;"><div class="sw" style="background:#b1dcd2"></div><svg class="abs" style="left:39px;top:1px" width="17" height="17" viewBox="0 0 17 17"><circle cx="8.500" cy="8.500" r="6.800" fill="#fafafa" stroke="#bdbdbd" stroke-width="2.200"/><line x1="4.300" y1="12.700" x2="12.700" y2="4.300" stroke="#5a5a5a" stroke-width="1.700"/></svg><div class="ln">User.3</div></div>
<div class="lay" style="left:1456px;top:643.5px;"><div class="sw" style="background:#dccb4e"></div><svg class="abs" style="left:39px;top:1px" width="17" height="17" viewBox="0 0 17 17"><circle cx="8.500" cy="8.500" r="6.800" fill="#fafafa" stroke="#bdbdbd" stroke-width="2.200"/><line x1="4.300" y1="12.700" x2="12.700" y2="4.300" stroke="#5a5a5a" stroke-width="1.700"/></svg><div class="ln">User.4</div></div>
<div class="lay" style="left:1456px;top:662.7px;"><div class="sw" style="background:#c2c2c2"></div><svg class="abs" style="left:39px;top:1px" width="17" height="17" viewBox="0 0 17 17"><circle cx="8.500" cy="8.500" r="6.800" fill="#fafafa" stroke="#bdbdbd" stroke-width="2.200"/><line x1="4.300" y1="12.700" x2="12.700" y2="4.300" stroke="#5a5a5a" stroke-width="1.700"/></svg><div class="ln">User.5</div></div>
<div class="lay" style="left:1456px;top:681.9px;"><div class="sw" style="background:#5a92dc"></div><svg class="abs" style="left:39px;top:1px" width="17" height="17" viewBox="0 0 17 17"><circle cx="8.500" cy="8.500" r="6.800" fill="#fafafa" stroke="#bdbdbd" stroke-width="2.200"/><line x1="4.300" y1="12.700" x2="12.700" y2="4.300" stroke="#5a5a5a" stroke-width="1.700"/></svg><div class="ln">User.6</div></div>
<div class="lay" style="left:1456px;top:701.1px;"><div class="sw" style="background:#b1dcd2"></div><svg class="abs" style="left:39px;top:1px" width="17" height="17" viewBox="0 0 17 17"><circle cx="8.500" cy="8.500" r="6.800" fill="#fafafa" stroke="#bdbdbd" stroke-width="2.200"/><line x1="4.300" y1="12.700" x2="12.700" y2="4.300" stroke="#5a5a5a" stroke-width="1.700"/></svg><div class="ln">User.7</div></div>
<div class="lay" style="left:1456px;top:720.3px;"><div class="sw" style="background:#dccb4e"></div><svg class="abs" style="left:39px;top:1px" width="17" height="17" viewBox="0 0 17 17"><circle cx="8.500" cy="8.500" r="6.800" fill="#fafafa" stroke="#bdbdbd" stroke-width="2.200"/><line x1="4.300" y1="12.700" x2="12.700" y2="4.300" stroke="#5a5a5a" stroke-width="1.700"/></svg><div class="ln">User.8</div></div>
<div class="lay" style="left:1456px;top:739.5px;"><div class="sw" style="background:#e8b3a7"></div><svg class="abs" style="left:39px;top:1px" width="17" height="17" viewBox="0 0 17 17"><circle cx="8.500" cy="8.500" r="6.800" fill="#fafafa" stroke="#bdbdbd" stroke-width="2.200"/><line x1="4.300" y1="12.700" x2="12.700" y2="4.300" stroke="#5a5a5a" stroke-width="1.700"/></svg><div class="ln">User.9</div></div>
<svg class="abs" style="left:1463.5px;top:322px" width="7" height="10" viewBox="0 0 7 10"><polygon points="0.5,0.5 6,5 0.5,9.500" fill="#3a3a7c"/></svg>
<div class="abs" style="left:1456px;top:1060px;width:208px;height:192px;background:#e9e9e9"></div>
<svg class="abs" style="left:1465px;top:1070.5px" width="10" height="7" viewBox="0 0 10 7"><polygon points="0.5,1 9.500,1 5,6.500" fill="#a9a9a9"/></svg>
<div class="t" style="left:1477px;top:1067px;font-size:12.5px;color:#b9b9b9">Layer Display Options</div>
<div class="sf" style="left:1462.5px;top:1089px;">Inactive layers (H):</div>
<div class="rb" style="left:1464px;top:1107.5px"><div class="abs" style="left:4.250px;top:4.250px;width:4.500px;height:4.500px;border-radius:50%;background:#1c1c1c"></div></div>
<div class="sf" style="left:1483px;top:1108px;">Normal</div>
<div class="rb" style="left:1540px;top:1107.5px"></div>
<div class="sf" style="left:1559px;top:1108px;">Dim</div>
<div class="rb" style="left:1598.5px;top:1107.5px"></div>
<div class="sf" style="left:1618px;top:1108px;">Hide</div>
<div class="abs" style="left:1463px;top:1126px;width:193px;height:1px;background:#dcdcdc"></div>
<div class="cb" style="left:1464px;top:1133px"></div>
<div class="sf" style="left:1483px;top:1133.5px;">Flip board view</div>
<div class="sf" style="left:1462px;top:1159px;">Presets (Ctrl+Tab):</div>
<div class="dd" style="left:1462px;top:1175px;width:195px;height:20.500px"><svg class="abs" style="right:5px;top:3.7px" width="8" height="13" viewBox="0 0 8 13"><path d="M1.2,5 L4,2 L6.800,5 M1.200,8 L4,11 L6.800,8" fill="none" stroke="#333" stroke-width="1.500" stroke-linecap="round" stroke-linejoin="round"/></svg></div>
<div class="sf" style="left:1462px;top:1202.5px;">Viewports (Option+Tab):</div>
<div class="dd" style="left:1462px;top:1219px;width:195px;height:20.500px"><svg class="abs" style="right:5px;top:3.7px" width="8" height="13" viewBox="0 0 8 13"><path d="M1.2,5 L4,2 L6.800,5 M1.200,8 L4,11 L6.800,8" fill="none" stroke="#333" stroke-width="1.500" stroke-linecap="round" stroke-linejoin="round"/></svg></div>
<div class="abs" style="left:1456px;top:1253.5px;width:208px;height:18px;background:#c9c9c9"></div>
<div class="t" style="left:1458px;top:1257px;font-size:11.5px;color:#2c2c2c;letter-spacing:0.1px">Selection Filter</div>
<div class="cb" style="left:1460.5px;top:1278.5px"><svg class="abs" style="left:1px;top:0px" width="12" height="13" viewBox="0 0 12 13"><path d="M2.300,6.800 L5,10 L10,2.600" fill="none" stroke="#1c1c1c" stroke-width="1.900" stroke-linecap="round" stroke-linejoin="round"/></svg></div>
<div class="sf" style="left:1480px;top:1279px;">All items</div>
<div class="cb" style="left:1560.5px;top:1278.5px"></div>
<div class="sf" style="left:1580px;top:1279px;">Locked items</div>
<div class="cb" style="left:1460.5px;top:1294.5px"><svg class="abs" style="left:1px;top:0px" width="12" height="13" viewBox="0 0 12 13"><path d="M2.300,6.800 L5,10 L10,2.600" fill="none" stroke="#1c1c1c" stroke-width="1.900" stroke-linecap="round" stroke-linejoin="round"/></svg></div>
<div class="sf" style="left:1480px;top:1295px;">Footprints</div>
<div class="cb" style="left:1560.5px;top:1294.5px"><svg class="abs" style="left:1px;top:0px" width="12" height="13" viewBox="0 0 12 13"><path d="M2.300,6.800 L5,10 L10,2.600" fill="none" stroke="#1c1c1c" stroke-width="1.900" stroke-linecap="round" stroke-linejoin="round"/></svg></div>
<div class="sf" style="left:1580px;top:1295px;">Text</div>
<div class="cb" style="left:1460.5px;top:1310.5px"><svg class="abs" style="left:1px;top:0px" width="12" height="13" viewBox="0 0 12 13"><path d="M2.300,6.800 L5,10 L10,2.600" fill="none" stroke="#1c1c1c" stroke-width="1.900" stroke-linecap="round" stroke-linejoin="round"/></svg></div>
<div class="sf" style="left:1480px;top:1311px;">Tracks</div>
<div class="cb" style="left:1560.5px;top:1310.5px"><svg class="abs" style="left:1px;top:0px" width="12" height="13" viewBox="0 0 12 13"><path d="M2.300,6.800 L5,10 L10,2.600" fill="none" stroke="#1c1c1c" stroke-width="1.900" stroke-linecap="round" stroke-linejoin="round"/></svg></div>
<div class="sf" style="left:1580px;top:1311px;">Vias</div>
<div class="cb" style="left:1460.5px;top:1326.5px"><svg class="abs" style="left:1px;top:0px" width="12" height="13" viewBox="0 0 12 13"><path d="M2.300,6.800 L5,10 L10,2.600" fill="none" stroke="#1c1c1c" stroke-width="1.900" stroke-linecap="round" stroke-linejoin="round"/></svg></div>
<div class="sf" style="left:1480px;top:1327px;">Pads</div>
<div class="cb" style="left:1560.5px;top:1326.5px"><svg class="abs" style="left:1px;top:0px" width="12" height="13" viewBox="0 0 12 13"><path d="M2.300,6.800 L5,10 L10,2.600" fill="none" stroke="#1c1c1c" stroke-width="1.900" stroke-linecap="round" stroke-linejoin="round"/></svg></div>
<div class="sf" style="left:1580px;top:1327px;">Graphics</div>
<div class="cb" style="left:1460.5px;top:1342.5px"><svg class="abs" style="left:1px;top:0px" width="12" height="13" viewBox="0 0 12 13"><path d="M2.300,6.800 L5,10 L10,2.600" fill="none" stroke="#1c1c1c" stroke-width="1.900" stroke-linecap="round" stroke-linejoin="round"/></svg></div>
<div class="sf" style="left:1480px;top:1343px;">Zones</div>
<div class="cb" style="left:1560.5px;top:1342.5px"><svg class="abs" style="left:1px;top:0px" width="12" height="13" viewBox="0 0 12 13"><path d="M2.300,6.800 L5,10 L10,2.600" fill="none" stroke="#1c1c1c" stroke-width="1.900" stroke-linecap="round" stroke-linejoin="round"/></svg></div>
<div class="sf" style="left:1580px;top:1343px;">Rule Areas</div>
<div class="cb" style="left:1460.5px;top:1358.5px"><svg class="abs" style="left:1px;top:0px" width="12" height="13" viewBox="0 0 12 13"><path d="M2.300,6.800 L5,10 L10,2.600" fill="none" stroke="#1c1c1c" stroke-width="1.900" stroke-linecap="round" stroke-linejoin="round"/></svg></div>
<div class="sf" style="left:1480px;top:1359px;">Dimensions</div>
<div class="cb" style="left:1560.5px;top:1358.5px"><svg class="abs" style="left:1px;top:0px" width="12" height="13" viewBox="0 0 12 13"><path d="M2.300,6.800 L5,10 L10,2.600" fill="none" stroke="#1c1c1c" stroke-width="1.900" stroke-linecap="round" stroke-linejoin="round"/></svg></div>
<div class="sf" style="left:1580px;top:1359px;">Other items</div>
<div class="abs" style="left:0px;top:1378.5px;width:1664px;height:30.5px;background:#ebebeb"></div>
<div class="abs" style="left:1413px;top:1378px;width:251px;height:31px;background:#ebebeb"></div>
<div class="msg" style="left:9px;top:1381.5px;">U12</div>
<div class="msg" style="left:9px;top:1395px;">USBLC6-2P6</div>
<div class="msg" style="left:109px;top:1381.5px;">Board Side</div>
<div class="msg" style="left:109px;top:1395px;">Front</div>
<div class="msg" style="left:197px;top:1381.5px;">Status:</div>
<div class="msg" style="left:197px;top:1395px;">Attributes:</div>
<div class="msg" style="left:286px;top:1381.5px;">Rotation</div>
<div class="msg" style="left:286px;top:1395px;">90</div>
<div class="msg" style="left:360px;top:1381.5px;">Component Class</div>
<div class="msg" style="left:360px;top:1395px;">&lt;None&gt;</div>
<div class="msg" style="left:483px;top:1381.5px;">Footprint: Package_TO_SOT_SMD:SOT-666</div>
<div class="msg" style="left:483px;top:1395px;">3D-Shape: ${KICAD8_3DMODEL_DIR}/Package_TO_SOT_SMD.3dshapes/SOT-666.wrl</div>
<div class="msg" style="left:964px;top:1381.5px;">Doc: SOT666</div>
<div class="msg" style="left:964px;top:1395px;">Keywords: SOT-666</div>
<div class="abs" style="left:0px;top:1408.5px;width:1664px;height:27px;background:linear-gradient(#e4e4e4,#f4f4f4 25%,#f3f3f3);border-top:1px solid #dadada"></div>
<div class="st" style="left:665px;white-space:pre">Z 97.96</div>
<div class="st" style="left:737px;white-space:pre">X 189.4840  Y 42.6720</div>
<div class="st" style="left:894px;white-space:pre">dx 189.4840  dy 42.6720  dist 194.2295</div>
<div class="st" style="left:1145px;white-space:pre">grid 0.2540</div>
<div class="st" style="left:1326px;white-space:pre">mm</div>
<svg class="abs" style="left:-888px;top:-2px" width="2560" height="1440" viewBox="0 0 2560 1440" font-family="Liberation Sans, sans-serif">
<g>
<line x1="927.5" y1="38" x2="927.5" y2="62" stroke="#d2d2d2" stroke-width="1.2"/>
<line x1="967.5" y1="38" x2="967.5" y2="62" stroke="#d2d2d2" stroke-width="1.2"/>
<line x1="1072" y1="38" x2="1072" y2="62" stroke="#d2d2d2" stroke-width="1.2"/>
<line x1="1145.5" y1="38" x2="1145.5" y2="62" stroke="#d2d2d2" stroke-width="1.2"/>
<line x1="1186" y1="38" x2="1186" y2="62" stroke="#d2d2d2" stroke-width="1.2"/>
<line x1="1387" y1="38" x2="1387" y2="62" stroke="#d2d2d2" stroke-width="1.2"/>
<line x1="1652" y1="38" x2="1652" y2="62" stroke="#d2d2d2" stroke-width="1.2"/>
<line x1="1757" y1="38" x2="1757" y2="62" stroke="#d2d2d2" stroke-width="1.2"/>
<line x1="1830" y1="38" x2="1830" y2="62" stroke="#d2d2d2" stroke-width="1.2"/>
<line x1="1871.5" y1="38" x2="1871.5" y2="62" stroke="#d2d2d2" stroke-width="1.2"/>
<line x1="1912" y1="38" x2="1912" y2="62" stroke="#d2d2d2" stroke-width="1.2"/>
<path d="M895,38.3 H912.5 L917,43 V61 H895 Z" fill="#484848"/><rect x="900" y="38.3" width="11" height="7.200" fill="#ededed"/><rect x="905.3" y="39.500" width="2.600" height="5" fill="#484848"/><rect x="898.700" y="49.800" width="14.200" height="10.200" fill="#ededed"/>
<rect x="936" y="39" width="22" height="22" rx="2.5" fill="#1d8a2c"/><path d="M937,46 Q945,40 957,44 M937,52 Q944,47 950,48 M940,60 Q941,54 947,53" stroke="#5fc25f" stroke-width="1.6" fill="none"/><circle cx="952.5" cy="54.5" r="5.6" fill="none" stroke="#b3283a" stroke-width="3.2" stroke-dasharray="2.3 1.6"/><circle cx="952.5" cy="54.5" r="4.2" fill="#f3d7da" stroke="#b3283a" stroke-width="2.6"/>
<path d="M982,41 H991 L995.600,45.600 V57.400 H982 Z" fill="#f4f4f4" stroke="#484848" stroke-width="1.3" stroke-linejoin="round"/><polygon points="991,41 995.600,45.600 991,45.600" fill="#484848"/><path d="M979.300,40.500 V58 M978,40.500 H980.600 M978,58 H980.600 M981.500,60.800 H996 M981.500,59.500 V62 M996,59.500 V62" fill="none" stroke="#484848" stroke-width="1"/>
<rect x="1012.400" y="38.800" width="15.200" height="7" fill="#f4f4f4" stroke="#484848" stroke-width="1.4"/><rect x="1007.800" y="44.700" width="24" height="10" rx="2.200" fill="#484848"/><path d="M1012.400,51.500 H1027.600 V57.500 L1024.200,61 H1012.400 Z" fill="#f4f4f4" stroke="#484848" stroke-width="1.4" stroke-linejoin="round"/>
<rect x="1046.400" y="38.800" width="10.800" height="4" fill="#f4f4f4" stroke="#484848" stroke-width="1.3"/><rect x="1040" y="42.200" width="23.800" height="6" rx="0.800" fill="#484848"/><path d="M1042.500,48 V61 M1061.600,48 V61 M1040.500,61 H1044.500 M1059.600,61 H1063.600" stroke="#484848" stroke-width="1.600" fill="none"/><path d="M1046.400,48 H1057.200 V53.500 L1054.200,56.500 H1046.400 Z" fill="#f4f4f4" stroke="#484848" stroke-width="1.3" stroke-linejoin="round"/>
<g fill="none" stroke="#c6c6c6" stroke-width="1.900" stroke-linecap="round" stroke-linejoin="round"><path d="M1085.800,45.500 A8.100,8.100 0 1 1 1087.500,57.600"/><polyline points="1084.200,40.300 1084.800,46.600 1091,46"/><path d="M1132,45.500 A8.100,8.100 0 1 0 1130.300,57.600"/><polyline points="1133.600,40.300 1133,46.600 1126.800,46"/></g>
<g fill="none" stroke="#484848" stroke-width="1.7" stroke-linecap="round"><circle cx="1168.3" cy="47.2" r="8.4"/><line x1="1162.1" y1="53.5" x2="1155.7" y2="60.2" stroke-width="2"/></g><text x="1168.3" y="51.5" font-size="11.5" font-weight="bold" text-anchor="middle" fill="#484848">A</text>
<g fill="none" stroke="#484848" stroke-width="1.900" stroke-linecap="round" stroke-linejoin="round"><path d="M1197,48.500 A10,10 0 0 1 1216.300,46.500"/><polyline points="1217.300,40.500 1216.600,46.800 1210.500,45.500"/><path d="M1216.800,52.300 A10,10 0 0 1 1197.600,54.500"/><polyline points="1196.600,60.300 1197.300,54.200 1203.300,55.500"/></g>
<g fill="none" stroke="#484848" stroke-width="1.7" stroke-linecap="round"><circle cx="1236.9" cy="47.2" r="8.4"/><line x1="1243.1" y1="53.5" x2="1249.3" y2="60.2" stroke-width="2"/></g><path d="M1232.200,47.200 H1241.600 M1236.900,42.500 V51.900" stroke="#484848" stroke-width="1.900"/>
<g fill="none" stroke="#484848" stroke-width="1.7" stroke-linecap="round"><circle cx="1268.9" cy="47.2" r="8.4"/><line x1="1275.1" y1="53.5" x2="1281.3" y2="60.2" stroke-width="2"/></g><path d="M1264.200,47.200 H1273.600" stroke="#484848" stroke-width="1.900"/>
<g fill="none" stroke="#484848" stroke-width="1.7" stroke-linecap="round"><circle cx="1301.4" cy="47.2" r="8.4"/><line x1="1307.6" y1="53.5" x2="1313.8" y2="60.2" stroke-width="2"/></g><path d="M1297.300,42.700 H1302.500 L1305.200,45.400 V52.300 H1297.300 Z" fill="#8f8f8f"/>
<g fill="none" stroke="#484848" stroke-width="1.7" stroke-linecap="round"><circle cx="1333.4" cy="47.2" r="8.4"/><line x1="1339.6" y1="53.5" x2="1345.8" y2="60.2" stroke-width="2"/></g><path d="M1327.500,51.500 L1331,45.800 L1333.300,49.300 L1335.300,47 L1338.800,51.500 Z" fill="#9c9c9c"/><circle cx="1336.8" cy="43.8" r="1.1" fill="#9c9c9c"/>
<g fill="none" stroke="#484848" stroke-width="1.7" stroke-linecap="round"><circle cx="1364.8" cy="47.2" r="8.4"/><line x1="1371" y1="53.5" x2="1377.2" y2="60.2" stroke-width="2"/></g><path d="M1362,41.200 L1362,51.800 L1364.400,49.500 L1366.200,53.200 L1367.800,52.400 L1366,48.800 L1369.200,48.600 Z" fill="#8f8f8f"/>
<polygon points="1398,49.3 1398,58.7 1417.5,58.7" fill="#8a8a8a"/><path d="M1413.4,51.5 Q1414,44 1405.5,43.600" fill="none" stroke="#2a7fc0" stroke-width="2.3"/><polygon points="1402.500,43.500 1407.500,39.800 1407.500,47.200" fill="#2a7fc0"/>
<polygon points="1450,49.3 1450,58.7 1430.5,58.7" fill="#8a8a8a"/><path d="M1434.600,51.5 Q1434,44 1442.500,43.600" fill="none" stroke="#2a7fc0" stroke-width="2.3"/><polygon points="1445.500,43.500 1440.500,39.800 1440.500,47.200" fill="#2a7fc0"/>
<polygon points="1462,39.600 1480.500,47.800 1462,48.300" fill="#8a8a8a"/><polygon points="1462,50.800 1480.500,51.300 1462,59.400" fill="#2a7fc0"/>
<polygon points="1502.700,40 1502.700,59.500 1494.600,59.500" fill="#8a8a8a"/><polygon points="1505.300,40 1505.300,59.500 1513.500,59.500" fill="#2a7fc0"/>
<rect x="1525.5" y="40.500" width="21" height="19" fill="none" stroke="#484848" stroke-width="1.4" stroke-dasharray="3 2"/><rect x="1523.5" y="38.5" width="4" height="4" fill="#484848"/><rect x="1523.5" y="57.5" width="4" height="4" fill="#484848"/><rect x="1544.5" y="38.5" width="4" height="4" fill="#484848"/><rect x="1544.5" y="57.5" width="4" height="4" fill="#484848"/><rect x="1529" y="44" width="10" height="9" fill="#fafafa" stroke="#484848" stroke-width="1.3"/><rect x="1534" y="48" width="10" height="9" fill="#fafafa" stroke="#484848" stroke-width="1.3"/>
<rect x="1557.5" y="40.500" width="21" height="19" fill="none" stroke="#cfcfcf" stroke-width="1.4" stroke-dasharray="3 2"/><rect x="1555.5" y="38.5" width="4" height="4" fill="#cfcfcf"/><rect x="1555.5" y="57.5" width="4" height="4" fill="#cfcfcf"/><rect x="1576.5" y="38.5" width="4" height="4" fill="#cfcfcf"/><rect x="1576.5" y="57.5" width="4" height="4" fill="#cfcfcf"/><rect x="1561" y="44" width="10" height="9" fill="#fafafa" stroke="#cfcfcf" stroke-width="1.3"/><rect x="1566" y="48" width="10" height="9" fill="#fafafa" stroke="#cfcfcf" stroke-width="1.3"/>
<path d="M1594.500,49 V45 Q1594.500,39.500 1600,39.500 Q1605.500,39.500 1605.500,45 V49" fill="none" stroke="#484848" stroke-width="2.4"/><rect x="1591" y="48" width="18" height="13.500" rx="2" fill="#484848"/><circle cx="1600" cy="54" r="1.8" fill="#eee"/>
<path d="M1632,49 V45 Q1632,39.500 1637.500,39.500 Q1642.500,39.500 1642.500,44" fill="none" stroke="#cdcdcd" stroke-width="2.4"/><rect x="1620" y="48" width="18" height="13.500" rx="2" fill="#cdcdcd"/>
<rect x="1662" y="41" width="19" height="18" fill="none" stroke="#2a7fc0" stroke-width="1.3"/><rect x="1663.5" y="38.5" width="4.500" height="5" fill="#2a7fc0"/><rect x="1663.5" y="56.5" width="4.500" height="5" fill="#2a7fc0"/><rect x="1669.5" y="38.5" width="4.500" height="5" fill="#2a7fc0"/><rect x="1669.5" y="56.5" width="4.500" height="5" fill="#2a7fc0"/><rect x="1675.5" y="38.5" width="4.500" height="5" fill="#2a7fc0"/><rect x="1675.5" y="56.5" width="4.500" height="5" fill="#2a7fc0"/><circle cx="1677.500" cy="54.500" r="6" fill="#c42a40"/><line x1="1674" y1="58" x2="1681" y2="51" stroke="#fff" stroke-width="1.8"/>
<rect x="1694" y="41" width="4.500" height="19" fill="#484848"/><rect x="1700" y="41" width="4.500" height="19" fill="#484848"/><polygon points="1706,42 1709.500,41 1713,59 1709.500,60" fill="#2a7fc0"/><circle cx="1711" cy="54" r="4.800" fill="#f4e9ea" stroke="#c42a40" stroke-width="1.8"/><line x1="1714.500" y1="57.500" x2="1718" y2="61.500" stroke="#c42a40" stroke-width="2.2"/>
<rect x="1729" y="38.500" width="16" height="14" rx="1.5" fill="#484848"/><path d="M1727,55 H1747" stroke="#484848" stroke-width="2.2"/><path d="M1726,59.500 H1748" stroke="#2a7fc0" stroke-width="2.4"/>
<rect x="1766" y="38" width="24" height="24" rx="3" fill="#cdbfa8"/><polygon points="1778,62 1790,62 1790,41 1784,47" fill="#2f9e3a"/><path d="M1772,41 V47 L1776,50 M1776,40 V46" stroke="#484848" stroke-width="1.5" fill="none"/><path d="M1781,48 Q1782,58 1771,58.500" stroke="#c42a40" stroke-width="3" fill="none"/><polygon points="1767.500,58.500 1773.500,53.500 1773.500,62.500" fill="#c42a40"/>
<rect x="1800.500" y="40" width="4" height="4" fill="none" stroke="#484848" stroke-width="1.2"/><rect x="1800.500" y="47" width="4" height="4" fill="none" stroke="#484848" stroke-width="1.2"/><rect x="1800.500" y="54" width="4" height="4" fill="none" stroke="#484848" stroke-width="1.2"/><path d="M1807.500,42 H1816" stroke="#484848" stroke-width="1.4"/><circle cx="1815.500" cy="54" r="6.300" fill="#c42a40"/><polyline points="1812.500,54 1815,56.500 1819,51.500" fill="none" stroke="#fff" stroke-width="1.8"/>
<rect x="1839" y="38" width="24" height="24" rx="3" fill="#cdbfa8"/><path d="M1851,38 V62 M1843,57 L1851,51 M1851,46 H1862" stroke="#484848" stroke-width="1.8" fill="none"/><path d="M1851,40 V46 H1862" stroke="#c42a40" stroke-width="2" fill="none"/><circle cx="1851" cy="46" r="2.200" fill="#c42a40"/>
<rect x="1880.500" y="38.500" width="22.500" height="22.500" rx="2.500" fill="#484848"/><path d="M1880.500,44 H1903" stroke="#8a8a8a" stroke-width="1"/><text x="1883" y="56.500" font-size="9.500" font-weight="bold" fill="#f2f2f2" font-family="Liberation Mono, monospace">&gt;_</text>
<rect x="1921.500" y="38.500" width="23" height="23" rx="2" fill="#9ede5a"/><g fill="none" stroke="#234d16" stroke-width="1.3"><rect x="1923.500" y="40.500" width="8" height="6"/><rect x="1923.500" y="49.500" width="8" height="10"/><rect x="1934.500" y="40.500" width="8" height="8.500"/><rect x="1934.500" y="51" width="8" height="8.500"/></g><text x="1938.500" y="47.800" font-size="7" font-weight="bold" text-anchor="middle" fill="#234d16">F</text><text x="1938.500" y="58.300" font-size="7" font-weight="bold" text-anchor="middle" fill="#234d16">B</text>
<rect x="1953" y="38.500" width="23.500" height="23.500" rx="1.5" fill="#22300f"/><circle cx="1964.700" cy="50.200" r="9.600" fill="#c9b84c"/><path d="M1959.500,44 V57 M1964.700,42 V58.500 M1970,44 V57 M1957,50 H1962 M1967.500,50 H1972.500" stroke="#22300f" stroke-width="1.7"/>
<rect x="1985.500" y="38.500" width="23.500" height="23.500" rx="1.5" fill="#131a33"/><path d="M1991,41 V60 M1997.300,41 V60 M2003.500,41 V60" stroke="#d9d9df" stroke-width="1.3"/><circle cx="1991" cy="50" r="2.700" fill="#e8e8ee"/><circle cx="1997.300" cy="53.500" r="2.700" fill="#d94050"/><circle cx="2003.500" cy="47.500" r="2.700" fill="#e8e8ee"/>
</g>
<g>
<line x1="893" y1="352" x2="913" y2="352" stroke="#cfcfcf" stroke-width="1.2"/>
<line x1="893" y1="395" x2="913" y2="395" stroke="#cfcfcf" stroke-width="1.2"/>
<line x1="893" y1="473" x2="913" y2="473" stroke="#cfcfcf" stroke-width="1.2"/>
<line x1="893" y1="551" x2="913" y2="551" stroke="#cfcfcf" stroke-width="1.2"/>
<line x1="893" y1="629" x2="913" y2="629" stroke="#cfcfcf" stroke-width="1.2"/>
<line x1="893" y1="741" x2="913" y2="741" stroke="#cfcfcf" stroke-width="1.2"/>
<circle cx="893.7" cy="115.2" r="1.55" fill="#484848"/><circle cx="893.7" cy="121.4" r="1.55" fill="#484848"/><circle cx="893.7" cy="127.6" r="1.55" fill="#484848"/><circle cx="893.7" cy="133.8" r="1.55" fill="#484848"/><circle cx="899.9" cy="115.2" r="1.55" fill="#484848"/><circle cx="899.9" cy="121.4" r="1.55" fill="#484848"/><circle cx="899.9" cy="127.6" r="1.55" fill="#484848"/><circle cx="899.9" cy="133.8" r="1.55" fill="#484848"/><circle cx="906.1" cy="115.2" r="1.55" fill="#484848"/><circle cx="906.1" cy="121.4" r="1.55" fill="#484848"/><circle cx="906.1" cy="127.6" r="1.55" fill="#484848"/><circle cx="906.1" cy="133.8" r="1.55" fill="#484848"/><circle cx="912.3" cy="115.2" r="1.55" fill="#484848"/><circle cx="912.3" cy="121.4" r="1.55" fill="#484848"/><circle cx="912.3" cy="127.6" r="1.55" fill="#484848"/><circle cx="912.3" cy="133.8" r="1.55" fill="#484848"/>
<circle cx="893.7" cy="149.7" r="1.55" fill="#484848"/><circle cx="893.7" cy="155.9" r="1.55" fill="#484848"/><circle cx="893.7" cy="162.1" r="1.55" fill="#484848"/><circle cx="893.7" cy="168.3" r="1.55" fill="#484848"/><circle cx="899.9" cy="149.7" r="1.55" fill="#484848"/><circle cx="899.9" cy="155.9" r="1.55" fill="#484848"/><circle cx="899.9" cy="162.1" r="1.55" fill="#484848"/><circle cx="899.9" cy="168.3" r="0.93" fill="#484848"/><circle cx="906.1" cy="149.7" r="1.55" fill="#484848"/><circle cx="906.1" cy="155.9" r="1.55" fill="#484848"/><circle cx="906.1" cy="162.1" r="0.93" fill="#484848"/><circle cx="906.1" cy="168.3" r="0.93" fill="#484848"/><circle cx="912.3" cy="149.7" r="1.55" fill="#484848"/><circle cx="912.3" cy="155.9" r="0.93" fill="#484848"/><circle cx="912.3" cy="162.1" r="0.93" fill="#484848"/><circle cx="912.3" cy="168.3" r="0.93" fill="#484848"/><line x1="892" y1="171" x2="914.500" y2="147" stroke="#484848" stroke-width="1.3"/>
<path d="M893,182 V204.500 H914" fill="none" stroke="#484848" stroke-width="1.300"/><line x1="893" y1="204.500" x2="912" y2="184" stroke="#484848" stroke-width="1.200"/><circle cx="912.500" cy="183.500" r="1.800" fill="#c42a40"/><text x="896.500" y="192" font-size="7.500" fill="#484848">r</text><text x="905" y="202.500" font-size="8.500" font-style="italic" fill="#484848">θ</text>
<text x="903" y="227" font-size="13" text-anchor="middle" fill="#484848" stroke="#484848" stroke-width="0.25">in</text><path d="M895,233 H911" stroke="#484848" stroke-width="1.5"/><polygon points="892,233 897.500,230.2 897.500,235.8" fill="#484848"/><polygon points="914,233 908.500,230.2 908.500,235.8" fill="#484848"/>
<text x="903" y="261" font-size="13" text-anchor="middle" fill="#484848" stroke="#484848" stroke-width="0.25">mil</text><path d="M895,267 H911" stroke="#484848" stroke-width="1.5"/><polygon points="892,267 897.500,264.2 897.500,269.8" fill="#484848"/><polygon points="914,267 908.500,264.2 908.500,269.8" fill="#484848"/>
<rect x="888.5" y="280.5" width="29" height="30" rx="1.5" fill="#dde8f6" stroke="#c5d5ea" stroke-width="1"/>
<text x="903" y="295" font-size="12.5" text-anchor="middle" fill="#484848" stroke="#484848" stroke-width="0.25">mm</text><path d="M895,301 H911" stroke="#484848" stroke-width="1.5"/><polygon points="892,301 897.500,298.2 897.500,303.8" fill="#484848"/><polygon points="914,301 908.500,298.2 908.500,303.8" fill="#484848"/>
<rect x="888.5" y="316" width="29" height="30" rx="1.5" fill="#dde8f6" stroke="#c5d5ea" stroke-width="1"/>
<path d="M903,319 V343 M891,330.500 H915" stroke="#8aa9c8" stroke-width="0.9"/><path d="M903,324 L905,329 L910,330.500 L905,332 L903,337 L901,332 L896,330.500 L901,329 Z" fill="#2a7fc0"/><path d="M903.500,331.500 L903.500,342 L906,339.500 L908,343.500 L909.700,342.700 L907.800,339 L911,338.700 Z" fill="#484848"/>
<path d="M895.500,362 V382.500 H914" fill="none" stroke="#484848" stroke-width="1.600"/><path d="M891.500,382.500 H896 M895.500,386 V382" stroke="#484848" stroke-width="1.200"/><line x1="895.500" y1="382.500" x2="911" y2="366" stroke="#484848" stroke-width="1.400"/><path d="M895.500,373 Q903.500,374 904.500,382.500" fill="none" stroke="#484848" stroke-width="1.200"/>
<rect x="888.5" y="402" width="29" height="30" rx="1.5" fill="#dde8f6" stroke="#c5d5ea" stroke-width="1"/>
<g fill="#fff" stroke="#484848" stroke-width="1.100"><path d="M895,410 L911,424 M895.500,426 L910,412 M895,410 L909.500,417.500" fill="none"/><circle cx="895" cy="410" r="2.100"/><circle cx="911" cy="424" r="2.100"/><circle cx="895.500" cy="426" r="2.100"/><circle cx="910.500" cy="411.500" r="2.100"/><circle cx="910" cy="417.800" r="1.700"/></g>
<g fill="#fff" stroke="#484848" stroke-width="1.100"><path d="M892,463 L914.500,440" fill="none"/><path d="M895.500,449 Q903,449 904,442.500 M900,461.500 Q909,460 911,452" fill="none"/><circle cx="895" cy="449" r="1.900"/><circle cx="904.300" cy="442" r="1.900"/><circle cx="900" cy="461.500" r="1.900"/><circle cx="911.200" cy="451.500" r="1.900"/></g>
<g fill="none" stroke-width="1.500"><path d="M892,486 L899,486 L905,492 L914,492" stroke="#484848"/><path d="M896,483 L903,483 L913,497" stroke="#c42a40"/><path d="M892,497 L899,497 L905,503 L914,503" stroke="#484848"/><path d="M892,502 L900,495 L907,500" stroke="#333"/><circle cx="901.500" cy="493.500" r="2.400" stroke="#e8932a" fill="#fff4d8"/></g>
<g fill="none" stroke-width="1.600" opacity="0.45"><path d="M896,540 V528 Q896,522 902,521 M901,540 V530 Q901,525 908,524 M906,540 V531" stroke="#c42a40"/><path d="M909,540 V526 L913,521" stroke="#2a7fc0"/><path d="M894,529 H913" stroke="#2a7fc0"/></g>
<path d="M901,562.500 H913.500 V583.500 H893 V572 H901 Z" fill="#2a7fc0"/><circle cx="906.500" cy="572.500" r="2.600" fill="#fff"/><path d="M907,572.500 H913" stroke="#fff" stroke-width="1.300"/><circle cx="906.500" cy="572.500" r="1.100" fill="#484848"/>
<rect x="888.5" y="592.5" width="29" height="30" rx="1.5" fill="#dde8f6" stroke="#c5d5ea" stroke-width="1"/>
<path d="M901,597 H913.500 V618 H893 V607 H901 Z" fill="none" stroke="#2a7fc0" stroke-width="1.200" stroke-dasharray="2.200 1.800"/><circle cx="908" cy="606.500" r="1.500" fill="#484848"/><path d="M908,606.500 H913" stroke="#484848" stroke-width="1"/>
<rect x="892.500" y="641" width="21" height="20" fill="none" stroke="#2a7fc0" stroke-width="1.100"/><rect x="894" y="638.500" width="4.300" height="5" fill="#2a7fc0"/><rect x="894" y="658.500" width="4.300" height="5" fill="#fff" stroke="#2a7fc0" stroke-width="0.900"/><rect x="900" y="638.500" width="4.300" height="5" fill="#2a7fc0"/><rect x="900" y="658.500" width="4.300" height="5" fill="#fff" stroke="#2a7fc0" stroke-width="0.900"/><rect x="906" y="638.500" width="4.300" height="5" fill="#2a7fc0"/><rect x="906" y="658.500" width="4.300" height="5" fill="#fff" stroke="#2a7fc0" stroke-width="0.900"/><line x1="891" y1="663" x2="915" y2="639" stroke="#484848" stroke-width="1.100"/>
<path d="M894,687 A9,9 0 0 1 909.500,678.700 L905.500,682.700 A3.600,3.600 0 0 0 899.500,686 Z" fill="#e8932a"/><circle cx="903" cy="685" r="8.500" fill="none" stroke="#e9c9a2" stroke-width="1.200"/><circle cx="903" cy="685" r="3.600" fill="#f6f6f6" stroke="#e0b98a" stroke-width="1"/><line x1="891" y1="697" x2="915" y2="673" stroke="#484848" stroke-width="1.100"/>
<path d="M902,707 V719" stroke="#c42a40" stroke-width="3.200"/><path d="M900.500,721 V731 M904.500,721 V731" stroke="#c42a40" stroke-width="1.100"/><path d="M892,718 H903" stroke="#2a7fc0" stroke-width="3"/><path d="M905,716.500 H915 M905,720 H915" stroke="#2a7fc0" stroke-width="1"/><line x1="891" y1="731" x2="915" y2="707" stroke="#484848" stroke-width="1.100"/>
<rect x="888.5" y="747.5" width="29" height="30" rx="1.5" fill="#dde8f6" stroke="#c5d5ea" stroke-width="1"/>
<polygon points="903,761.500 913,768 903,774.500 893,768" fill="#e8932a"/><polygon points="903,758.500 913,765 903,771.500 893,765" fill="#6d6d6d"/><polygon points="903,751.500 913.500,760 903,768.500 892.500,760" fill="#1f6fb2"/>
<path d="M893,807 L912,788" stroke="#484848" stroke-width="1.600"/><path d="M908,790.500 L913.500,785.500 L915,787 L910.500,793 Z" fill="#484848"/><path d="M891.500,808.500 L894.500,805.500" stroke="#484848" stroke-width="2.800" stroke-linecap="round"/><path d="M896.500,790.500 L912.500,806.500" stroke="#2a7fc0" stroke-width="2.800" stroke-linecap="round"/><path d="M892.500,788 L895,790.500 L897.500,788 L895.500,785.500 Q899.500,784.500 900.500,788 Q901,791 898.500,792.500 Q895.500,794 893,791.500 Q891.500,790 892.500,788 Z" fill="#2a7fc0"/><circle cx="912.500" cy="806.500" r="1" fill="#fff"/>
</g>
<g>
<line x1="2309" y1="181" x2="2330" y2="181" stroke="#cfcfcf" stroke-width="1.2"/>
<line x1="2309" y1="395" x2="2330" y2="395" stroke="#cfcfcf" stroke-width="1.2"/>
<line x1="2309" y1="814" x2="2330" y2="814" stroke="#cfcfcf" stroke-width="1.2"/>
<rect x="2304.5" y="109.5" width="29" height="30" rx="1.5" fill="#dde8f6" stroke="#c5d5ea" stroke-width="1"/>
<path d="M2314.500,116.500 V131.500 L2318,128.300 L2320.500,133.500 L2322.700,132.500 L2320.300,127.500 L2324.500,127.200 Z" fill="#484848"/>
<path d="M2309,149 L2330,170 M2330,149.500 L2309,170.500" stroke="#484848" stroke-width="1.200"/><circle cx="2319.500" cy="159.800" r="2.600" fill="#fff" stroke="#484848" stroke-width="1.100"/>
<path d="M2308,193 H2331 V213.500 H2308 V206 Q2310.500,205.500 2310.500,203.300 Q2310.500,201 2308,200.500 Z" fill="none" stroke="#2a7fc0" stroke-width="1.200"/><rect x="2310.5" y="190" width="5" height="5.800" fill="#2a7fc0"/><rect x="2310.5" y="210.5" width="5" height="5.800" fill="#2a7fc0"/><rect x="2316.7" y="190" width="5" height="5.800" fill="#2a7fc0"/><rect x="2316.7" y="210.5" width="5" height="5.800" fill="#2a7fc0"/><rect x="2323" y="190" width="5" height="5.800" fill="#2a7fc0"/><rect x="2323" y="210.5" width="5" height="5.800" fill="#2a7fc0"/>
<path d="M2309.500,247.500 L2313.500,238.500 L2323.500,238.500 L2329.500,227.500" fill="none" stroke="#2a7fc0" stroke-width="1.900" stroke-linecap="round" stroke-linejoin="round"/><polygon points="2327.5,252.5 2333.5,252.5 2333.5,246.5" fill="#111"/>
<path d="M2308.500,275.500 Q2310.800,276.500 2310.800,272 V267.500 Q2310.800,264 2313.200,264 Q2315.600,264 2315.600,267.500 V274.500 Q2315.600,278 2317.900,278 Q2320.200,278 2320.200,274.500 V267.500 Q2320.200,264 2322.500,264 Q2324.800,264 2324.800,267.500 V271.500 Q2324.800,275.300 2327.200,275.300 Q2329.500,275.300 2330.500,272.500" fill="none" stroke="#2a7fc0" stroke-width="1.700" stroke-linecap="round"/><polygon points="2327.5,286.5 2333.5,286.5 2333.5,280.5" fill="#111"/>
<circle cx="2319" cy="305.800" r="5.300" fill="#fff6e6" stroke="#e8932a" stroke-width="4"/>
<path d="M2315,329.500 H2329.500 V350 H2309.500 V340 H2315 Z" fill="#2a7fc0"/><circle cx="2322.500" cy="338.800" r="2.900" fill="#fff"/><path d="M2323,338.800 H2329.500" stroke="#fff" stroke-width="1.600"/><circle cx="2322.500" cy="338.800" r="1.200" fill="#484848"/>
<defs><pattern id="hat" width="4.200" height="4.200" patternUnits="userSpaceOnUse" patternTransform="rotate(45)"><rect width="4.200" height="2.100" fill="#484848"/></pattern></defs><path d="M2315.500,364.500 H2329 V384 H2310 V375 H2315.500 Z" fill="url(#hat)" stroke="#484848" stroke-width="1.200"/>
<line x1="2310" y1="427" x2="2328.500" y2="408" stroke="#484848" stroke-width="1.700" stroke-linecap="round"/>
<path d="M2310.500,461.500 Q2311.500,444.500 2328.500,442.500" fill="none" stroke="#484848" stroke-width="1.700" stroke-linecap="round"/>
<rect x="2310" y="477.500" width="18.500" height="17" fill="#b9b9b9" stroke="#484848" stroke-width="1.500"/>
<circle cx="2319" cy="520" r="9.200" fill="#b9b9b9" stroke="#484848" stroke-width="1.500"/>
<path d="M2310,545.500 L2328.500,548 L2326,562 L2310.500,563.500 L2318,554 Z" fill="#b9b9b9" stroke="#484848" stroke-width="1.500" stroke-linejoin="round"/>
<path d="M2313.500,598.500 Q2311.500,589 2318.500,588 Q2326,587 2325.500,578.500" fill="none" stroke="#484848" stroke-width="1.500"/><path d="M2308.500,588 H2330" stroke="#2a7fc0" stroke-width="1.100" stroke-dasharray="2.500 1.500"/><circle cx="2309.500" cy="588" r="1.500" fill="#2a7fc0"/><circle cx="2329" cy="588" r="1.500" fill="#2a7fc0"/>
<rect x="2308.500" y="612" width="21.500" height="21" rx="3.500" fill="#484848"/><path d="M2311,629.500 L2316.500,621.500 L2320.500,626.500 L2323,624 L2327.500,629.500 Z" fill="#f2f2f2"/><circle cx="2324" cy="617.500" r="2" fill="#f2f2f2"/>
<path d="M2311,647.500 H2327.500 M2319.200,647.500 V666" stroke="#484848" stroke-width="3" fill="none"/>
<rect x="2310" y="682" width="18.500" height="17.500" fill="#c4c4c4" stroke="#484848" stroke-width="1.500"/><path d="M2313,687 H2325 M2313,690.500 H2321 M2313,694 H2324" stroke="#484848" stroke-width="1"/>
<rect x="2308" y="713" width="23" height="23.500" fill="#fafafa" stroke="#6a6a6a" stroke-width="1.100"/><rect x="2308" y="713" width="23" height="6.500" fill="#a9a9a9"/><path d="M2315.700,713 V736.500 M2323.300,713 V736.500 M2308,719.500 H2331 M2308,725.200 H2331 M2308,730.800 H2331" stroke="#6a6a6a" stroke-width="1"/>
<path d="M2311,750 H2329.500 M2319,767.800 H2329" stroke="#484848" stroke-width="1"/><path d="M2327.500,752.500 V765" stroke="#484848" stroke-width="1"/><circle cx="2310.500" cy="750" r="2.300" fill="#2a7fc0"/><circle cx="2318.500" cy="767.800" r="2.300" fill="#2a7fc0"/><polygon points="2327.5,775 2333.5,775 2333.5,769" fill="#111"/>
<path d="M2311,781.500 V796 L2314.500,793 L2317,798 L2319,797 L2316.800,792.200 L2321,792 Z" fill="#484848"/><circle cx="2324" cy="798.300" r="6" fill="#c42a40"/><path d="M2321.500,795.800 L2326.500,800.800 M2326.500,795.800 L2321.500,800.800" stroke="#fff" stroke-width="1.700"/>
<circle cx="2310.5" cy="827.5" r="1.350" fill="#484848"/><circle cx="2310.5" cy="833.1" r="1.350" fill="#484848"/><circle cx="2310.5" cy="838.7" r="1.350" fill="#484848"/><circle cx="2310.5" cy="844.3" r="1.350" fill="#484848"/><circle cx="2316.1" cy="827.5" r="1.350" fill="#484848"/><circle cx="2316.1" cy="833.1" r="1.350" fill="#484848"/><circle cx="2316.1" cy="838.7" r="1.350" fill="#484848"/><circle cx="2316.1" cy="844.3" r="1.350" fill="#484848"/><circle cx="2321.7" cy="827.5" r="1.350" fill="#484848"/><circle cx="2321.7" cy="833.1" r="1.350" fill="#484848"/><circle cx="2321.7" cy="838.7" r="1.350" fill="#484848"/><circle cx="2321.7" cy="844.3" r="1.350" fill="#484848"/><circle cx="2327.3" cy="827.5" r="1.350" fill="#484848"/><circle cx="2327.3" cy="833.1" r="1.350" fill="#484848"/><circle cx="2327.3" cy="838.7" r="1.350" fill="#484848"/><circle cx="2327.3" cy="844.3" r="1.350" fill="#484848"/><path d="M2316,826 V846 M2308.500,838.800 H2328" stroke="#2a7fc0" stroke-width="1.500"/><polygon points="2327.5,852.5 2333.5,852.5 2333.5,846.5" fill="#111"/>
<g transform="rotate(-38 2319 870.500)"><rect x="2307.500" y="866.500" width="23" height="8" rx="1" fill="#f2f2f2" stroke="#484848" stroke-width="1.600"/><path d="M2313,874.500 V871 M2318,874.500 V870 M2323,874.500 V871" stroke="#484848" stroke-width="1.100"/></g>
</g>
<path d="M1111.500,76 V90.500 Q1111.500,92.500 1114,92.500 H1126 Q1128,92.500 1128,90.500 V76" fill="none" stroke="#3f3f3f" stroke-width="1.500"/><path d="M1116,80.500 H1124 M1116,84 H1124" stroke="#3f3f3f" stroke-width="1.100"/><circle cx="1120" cy="93.500" r="2.300" fill="#2a7fc0"/>
<polyline points="1496.500,84 1500.800,88 1505,84" fill="none" stroke="#222" stroke-width="1.800" stroke-linecap="round" stroke-linejoin="round"/>
<rect x="1518.500" y="73" width="24" height="25" fill="#4f82c8"/><polygon points="1518.500,73 1535,73 1523.500,98 1518.500,98" fill="#d13636"/><line x1="1536.500" y1="73" x2="1525" y2="98" stroke="#f4f4f4" stroke-width="1.300"/>
</svg>
</div>
<div class="abs" style="left:73px;top:0;width:2470px;height:2px;background:#cfd0d1"></div><div class="abs" style="left:1657px;top:0;width:678px;height:1.5px;background:#1c1c1c"></div>
</div></body></html>
